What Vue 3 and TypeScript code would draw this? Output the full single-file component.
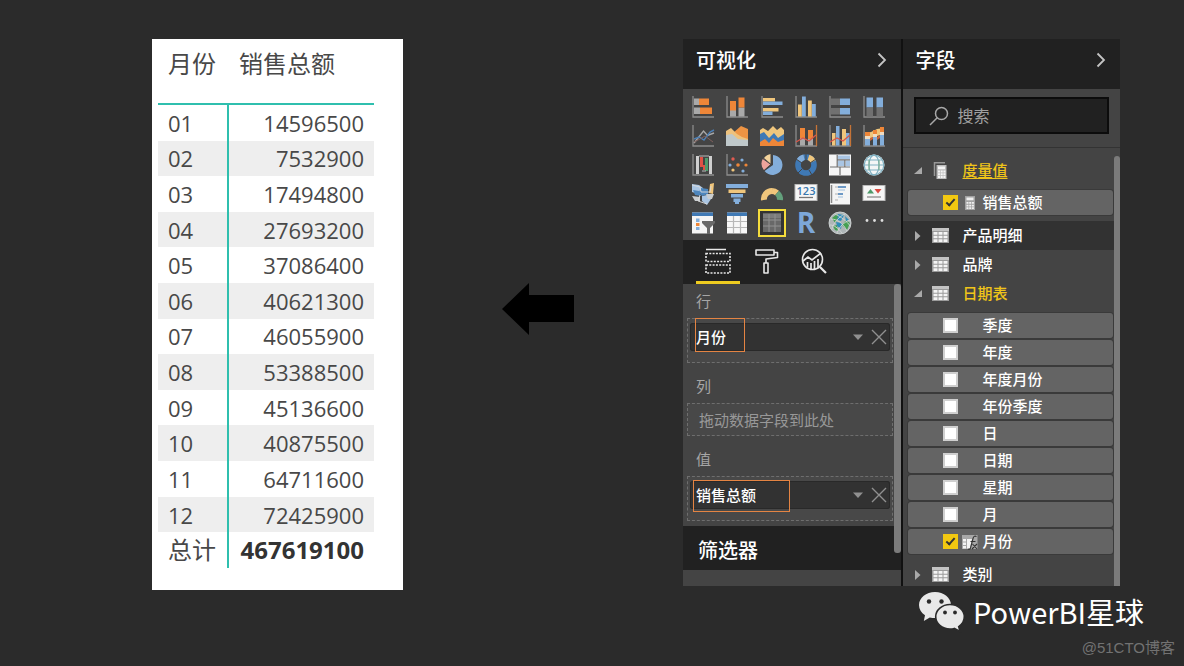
<script setup lang="ts">
import { ref } from 'vue'

interface SalesRow { month: string; total: string }
interface Visual { name: string; shape: string; active?: boolean }
interface Well { id: string; label: string; value: string }
interface Field { name: string; checked: boolean; icon?: 'calc' | 'fx' }
interface Group { name: string; icon: 'calc' | 'table'; open: boolean; used?: boolean; hover?: boolean; fields: Field[] }

const sales: SalesRow[] = [
  { month: '01', total: '14596500' },
  { month: '02', total: '7532900' },
  { month: '03', total: '17494800' },
  { month: '04', total: '27693200' },
  { month: '05', total: '37086400' },
  { month: '06', total: '40621300' },
  { month: '07', total: '46055900' },
  { month: '08', total: '53388500' },
  { month: '09', total: '45136600' },
  { month: '10', total: '40875500' },
  { month: '11', total: '64711600' },
  { month: '12', total: '72425900' },
]

const axis = '<path d="M2 1V22H23" fill="none" stroke="#8c8c8c" stroke-width="1.3"/>'
const bars = (color: string, d: string) => `<path d="${d}" fill="${color}"/>`
const O = '#ee8638'
const Y = '#f0c67c'
const B = '#83aedb'
const G = '#a9a9a9'
const D = '#707070'

const visuals: Visual[] = [
  { name: '堆积条形图', shape: axis + bars(G, 'M3 3.500h5v6.500H3zM3 12.500h6v6.500H3z') + bars(O, 'M8 3.500h10v6.500H8zM9 12.500h12v6.500H9z') },
  { name: '堆积柱形图', shape: axis + bars(G, 'M5 15h6v6.500H5zM13.500 12.500h6v9h-6z') + bars(O, 'M5 6h6v9.500H5zM13.500 2.500h6v10h-6z') },
  { name: '簇状条形图', shape: axis + bars(Y, 'M3 3h12v3.500H3zM3 13h15.500v3.500H3z') + bars(B, 'M3 6.500h19.500V10H3zM3 16.500h9.500V20H3z') },
  { name: '簇状柱形图', shape: axis + bars(Y, 'M4 9.500h3.800v12H4zM14 5.500h3.800v16H14z') + bars(B, 'M8 1.500h3.800v20H8zM18 9h3.800v12.500H18z') },
  { name: '百分比堆积条形图', shape: axis + bars(D, 'M3 3.500h9V10H3zM3 13h9v6.500H3z') + bars(B, 'M12 3.500h10V10H12zM12 13h10v6.500H12z') },
  { name: '百分比堆积柱形图', shape: axis + bars(B, 'M4.500 2.500h6.500v10H4.500zM14.500 2.500H21v10h-6.500z') + bars(D, 'M4.500 12.500h6.500v9H4.500zM14.500 12.500H21v9h-6.500z') },
  { name: '折线图', shape: axis + '<path d="M3 19 12.500 7l4 4.500L23 9" fill="none" stroke="#a8a8a8" stroke-width="1.400"/><path d="M3 15l5-2 5 3 6-8 4-2" fill="none" stroke="#4d7fb4" stroke-width="1.400"/><path d="M3 18l6-3 5-3 8 6" fill="none" stroke="#80605c" stroke-width="1"/>' },
  { name: '分区图', shape: '<path d="M1 22V8l7 1 8-7 7 3v17z" fill="#ee9444"/><path d="M1 22V7l5-3 6 6 5 3 6 2v7z" fill="#eec27d"/><path d="M1 22V11l6-1 6 5 10 1v6z" fill="#bfc8ca"/>' },
  { name: '堆积面积图', shape: '<path d="M0 22V6l3-2 5 3 5-5 4 4 4-3 3 3v16z" fill="#f0c67c"/><path d="M0 22V10l4-2 5 6 5-5 4 5 6-4v12z" fill="#3f79b5"/><path d="M0 22v-4l5-3 4 4 4-5 5 4 6-2v6z" fill="#ee8638"/>' },
  { name: '折线和堆积柱形图', shape: axis + bars(G, 'M6 14h5v7.500H6zM14 14h5v7.500h-5z') + bars(O, 'M6 4h5v10H6zM14 6h5v9h-5z') + '<path d="M22.500 1v21" stroke="#c57437" stroke-width="1.300"/><path d="M2 18l7-4 6 3 7-6" fill="none" stroke="#d9574a" stroke-width="1.300"/>' },
  { name: '折线和簇状柱形图', shape: axis + bars(Y, 'M4 9h3.500v12.500H4zM14 5h4v16.500h-4z') + bars(B, 'M8 2h3.500v19.500H8zM18 9h3.500v12.500H18z') + '<path d="M22.500 1v21" stroke="#c57437" stroke-width="1.300"/><path d="M2 18l7-4 6 3 7-6" fill="none" stroke="#d9574a" stroke-width="1.300"/>' },
  { name: '功能区图', shape: axis + bars(Y, 'M3 9l6-1 6-3 7-1v6l-7 2-6 2H3z') + bars(O, 'M3 8h5v4H3zM11 6h4v4h-4zM18 3h4v5h-4z') + bars('#f0dcc2', 'M3 12h5v3H3zM11 10h4v3h-4zM18 8h4v3h-4z') + bars('#c9653a', 'M8 14l3-1v2l-3 2zM15 13l3-2v3l-3 2z') + bars(B, 'M3 15h5v6.500H3zM11 13h4v8.500h-4zM18 11h4v10.500h-4z') },
  { name: '瀑布图', shape: axis + '<path d="M5 21V3h3v18zM18 21V3h3v18z" fill="#cfcfcf"/><path d="M9 4h3v10H9z" fill="#e05245"/><path d="M12 12h2v5h-2z" fill="#e05245"/><path d="M14 5h3v13h-3z" fill="#4d9a6a"/><path d="M8 3h10M11 18h4" stroke="#b9b9b9"/>' },
  { name: '散点图', shape: axis + '<g fill="#83aedb"><circle cx="5" cy="12" r="1.600"/><circle cx="17" cy="7" r="1.600"/><circle cx="18" cy="18" r="1.600"/></g><g fill="#ee8638"><circle cx="13" cy="12" r="1.800"/><circle cx="21" cy="12" r="1.600"/></g><circle cx="8" cy="6" r="1.700" fill="#df5b51"/><circle cx="8" cy="17" r="1.600" fill="#f0c67c"/>' },
  { name: '饼图', shape: '<path d="M13 2a10 10 0 1 1-8.500 16L13 12z" fill="#83aedb"/><path d="M11 11V1a10 10 0 0 0-7 4z" fill="#f3d39c"/><path d="M11 11 3 5.500a10 10 0 0 0 1 11.500z" fill="#eda39b"/><path d="M11 0v11.500L4 18M11 11.500 2 5" fill="none" stroke="#444" stroke-width="1"/>' },
  { name: '环形图', shape: '<circle cx="12" cy="12" r="8" fill="none" stroke="#3f79b5" stroke-width="5.600"/><path d="M14.500 4.400A8 8 0 0 1 19.200 8.500" fill="none" stroke="#f0c67c" stroke-width="5.600"/><path d="M5 8A8 8 0 0 1 10 4.200" fill="none" stroke="#83aedb" stroke-width="5.600"/><path d="M12 0v8M22 6l-6 4M2 6l6 4M4 20l4-4M18 22l-3-5" stroke="#444"/>' },
  { name: '树状图', shape: '<rect x="1" y="1.500" width="22" height="21" fill="#f5f5f5"/><path d="M10 2.500h12V6H10zM10 7.500h6V13h-6zM17.500 7.500H22V13h-4.500z" fill="#a9c5e3"/><path d="M9.200 2v12M2 14h20M9 6.800h13M16.800 7v7M12 14v8" stroke="#707070" stroke-width="1.200"/>' },
  { name: '地图', shape: '<circle cx="12" cy="12" r="10.500" fill="#f4f6f6"/><g fill="none" stroke="#7fb0c1" stroke-width="1.200"><circle cx="12" cy="12" r="9.800"/><ellipse cx="12" cy="12" rx="5" ry="9.800"/><path d="M2 12h20M4 7h16M4 17h16"/></g><path d="M7 7v10M17 7v10" stroke="#7cb08a"/>' },
  { name: '着色地图', shape: '<path d="M1 2l7 1 4 3 1 5-6 1-6-2zM11 14l5-1 4 4-4 6-5-4z" fill="#a9c5e3"/><path d="M10 6l7 1v5l-6 2-3-4zM2 8l6 1 2 5-6-1z" fill="#4d86bd"/><path d="M19 2l4-1-1 11-4-1z" fill="#f0c67c"/><path d="M15 12h8l-2 5h-4zM1 14l8 1v4H4z" fill="#c9cdd0"/><path d="M1 3l8 2 1 5 9 0 1-6M9 13l-2 6 9 3" fill="none" stroke="#dadada" stroke-width=".9"/>' },
  { name: '漏斗图', shape: bars(B, 'M1 2h22v4H1zM6 12h12v3.500H6zM8.500 16.500h7V20h-7z') + bars(Y, 'M3.500 7.500h17V11h-17z') + bars(B, 'M10 20h4v2h-4z') },
  { name: '仪表', shape: '<path d="M4 18a8 8 0 0 1 8-9" fill="none" stroke="#f0c67c" stroke-width="6"/><path d="M12 9a8 8 0 0 1 5 2" fill="none" stroke="#f0c67c" stroke-width="6"/><path d="M17 11a8 8 0 0 1 3 7" fill="none" stroke="#63a07c" stroke-width="6"/>' },
  { name: '卡片图', shape: '<rect x="1" y="2.500" width="22" height="16" fill="#f6f6f6" stroke="#bbb"/><text x="12" y="12.500" text-anchor="middle" font-family="Open Sans, sans-serif" font-size="11" font-weight="600" fill="#3978ae">123</text><path d="M5 15.500h14" stroke="#777" stroke-width="1.300"/>' },
  { name: '多行卡', shape: '<rect x="2" y="1.500" width="20" height="21" fill="#f4f4f4"/><path d="M3.500 3v18" stroke="#888" stroke-width="1.500"/><path d="M7 5h3M7 12h3M7 18h3" stroke="#b0b0b0"/><path d="M10 5h8M10 12h5" stroke="#3f79b5" stroke-width="1.700"/><path d="M10 8h7M10 15h5" stroke="#9fbfdd"/>' },
  { name: 'KPI', shape: '<rect x="1" y="3.500" width="22" height="15" fill="#f6f6f6" stroke="#bbb"/><path d="M5 11.500 8.500 7l3.500 4.500z" fill="#4d9a6a"/><path d="M12.500 7h7L16 11.500z" fill="#d94a3f"/><path d="M5 15h14" stroke="#8b8b8b" stroke-width="1.300"/>' },
  { name: '切片器', shape: '<path d="M1 1.500h21v21H1z" fill="#f5f5f5"/><path d="M1 1.500h21v3.500H1z" fill="#3f79b5"/><path d="M5 7.500h3.500V11H5zM5 16h3.500v3H5z" fill="#83aedb"/><path d="M5 12h3.500v3H5z" fill="#ee8638"/><path d="M11 10h13v2l-5 5v6h-3v-6l-5-5z" fill="#696969"/>' },
  { name: '表', shape: '<path d="M2 1.500h20v21H2z" fill="#f7f7f7"/><path d="M2 1.500h20v3.500H2z" fill="#3f79b5"/><path d="M8.500 5v17M15.500 5v17M2 10.500h20M2 16.500h20" stroke="#b8b8b8" stroke-width="1.200"/>' },
  { name: '矩阵', active: true, shape: '<path d="M3 2.500h18V21H3z" fill="#686868"/><path d="M3 2.500h18V7H3z" fill="#7c7c7c"/><path d="M9 3v18M15 3v18M3 9h18M3 15h18" stroke="#919191"/>' },
  { name: 'R 脚本视觉对象', shape: '<text x="12" y="22" text-anchor="middle" font-family="Open Sans, sans-serif" font-size="28" font-weight="700" fill="#7da7d8">R</text>' },
  { name: 'ArcGIS Maps', shape: '<circle cx="12" cy="12" r="11" fill="#aeb6b7"/><path d="M4 7l5-4 2 4-4 5zM14 14l4-5 4 3-3 7zM5 15l4-1 1 6-3-1z" fill="#45a052"/><path d="M10 3l6 1-3 6-4-1zM8 11l6 1-1 6-4-3zM17 5l4 4-3 1z" fill="#2f8cb8"/><g fill="none" stroke="#d0d5d5" stroke-width=".9"><circle cx="12" cy="12" r="11"/><path d="M3 8c6 0 12 4 16 12M7 3c6 3 12 7 15 12M2 14c4 0 8 3 12 8M17 3C10 6 5 13 4 18M22 9c-6 2-11 7-13 13"/></g>' },
  { name: '更多', shape: '<g fill="#dedede"><circle cx="5" cy="9.500" r="1.400"/><circle cx="12.500" cy="9.500" r="1.400"/><circle cx="20" cy="9.500" r="1.400"/></g>' },
]

const wells: Well[] = [
  { id: 'rows', label: '行', value: '月份' },
  { id: 'columns', label: '列', value: '' },
  { id: 'values', label: '值', value: '销售总额' },
]

const groups = ref<Group[]>([
  { name: '度量值', icon: 'calc', open: true, used: true, fields: [{ name: '销售总额', checked: true, icon: 'calc' }] },
  { name: '产品明细', icon: 'table', open: false, hover: true, fields: [] },
  { name: '品牌', icon: 'table', open: false, fields: [] },
  {
    name: '日期表', icon: 'table', open: true, used: true,
    fields: [
      { name: '季度', checked: false },
      { name: '年度', checked: false },
      { name: '年度月份', checked: false },
      { name: '年份季度', checked: false },
      { name: '日', checked: false },
      { name: '日期', checked: false },
      { name: '星期', checked: false },
      { name: '月', checked: false },
      { name: '月份', checked: true, icon: 'fx' },
    ],
  },
  { name: '类别', icon: 'table', open: false, fields: [] },
])

const search = ref('')
</script>

<template>
  <div class="slide">
    <main class="stage">
      <section class="card">
        <table class="matrix">
          <thead>
            <tr><th scope="col">月份</th><th scope="col">销售总额</th></tr>
          </thead>
          <tbody>
            <tr v-for="row in sales" :key="row.month">
              <th scope="row">{{ row.month }}</th>
              <td>{{ row.total }}</td>
            </tr>
            <tr class="total"><th scope="row">总计</th><td>467619100</td></tr>
          </tbody>
        </table>
      </section>

      <div class="arrow-cell">
        <svg class="arrow" viewBox="0 0 72 52" aria-hidden="true"><path d="M0 26 27 0V12H72V39H27V52Z" /></svg>
      </div>

      <div class="panes">
        <section class="pane">
          <header class="pane-head">
            <h2>可视化</h2>
            <button class="collapse" type="button" aria-label="折叠可视化">
              <svg viewBox="0 0 10 16"><path d="M1.500 1.500 8 8l-6.500 6.500" /></svg>
            </button>
          </header>
          <div class="gallery">
            <button
              v-for="v in visuals" :key="v.name" type="button"
              class="visual" :class="{ active: v.active }" :aria-label="v.name"
            >
              <svg viewBox="0 0 24 24" v-html="v.shape"></svg>
            </button>
          </div>
          <nav class="tabs">
            <button class="tab current" type="button" aria-label="字段">
              <svg viewBox="0 0 28 28">
                <path d="M2 2.500h20" stroke-width="1.500" />
                <path d="M2 6.500h24v8H2zM2 18h24v8H2z" stroke-dasharray="2 1.300" stroke-width="1.600" />
              </svg>
            </button>
            <button class="tab" type="button" aria-label="格式">
              <svg viewBox="0 0 28 28">
                <path d="M4 3h18v5H4zM22 5.500h3.500v5L14 12v4M12 16h4v10h-4z" stroke-linejoin="round" stroke-width="1.600" />
              </svg>
            </button>
            <button class="tab" type="button" aria-label="分析">
              <svg viewBox="0 0 28 28">
                <circle cx="12.500" cy="12.500" r="10" stroke-width="1.600" />
                <path d="M20 20l6 6" stroke-width="2.200" />
                <path d="M3 14l5-4 4 3 9-7M7.500 20v-5M11 22v-6M14.500 22v-8M18 20v-8" stroke-width="1.700" />
              </svg>
            </button>
          </nav>
          <div class="wells">
            <div v-for="w in wells" :key="w.id" class="well">
              <h3>{{ w.label }}</h3>
              <div class="drop" :class="{ empty: !w.value }">
                <div v-if="w.value" class="chip" :class="w.id">
                  <span>{{ w.value }}</span>
                  <button type="button" aria-label="菜单"><svg class="caret" viewBox="0 0 10 6"><path d="M0 .5h10L5 6z" /></svg></button>
                  <button type="button" aria-label="移除"><svg class="cross" viewBox="0 0 16 16"><path d="M1 1l14 14M15 1 1 15" /></svg></button>
                  <i class="mark"></i>
                </div>
                <template v-else>拖动数据字段到此处</template>
              </div>
            </div>
            <i class="scroll"></i>
          </div>
          <h2 class="filters">筛选器</h2>
        </section>

        <section class="pane">
          <header class="pane-head">
            <h2>字段</h2>
            <button class="collapse" type="button" aria-label="折叠字段">
              <svg viewBox="0 0 10 16"><path d="M1.500 1.500 8 8l-6.500 6.500" /></svg>
            </button>
          </header>
          <div class="search">
            <label>
              <svg viewBox="0 0 20 20"><circle cx="12.500" cy="7.500" r="6" /><path d="M8.200 11.800 1 19" /></svg>
              <input v-model="search" type="text" placeholder="搜索" aria-label="搜索" />
            </label>
          </div>
          <div class="tree">
            <template v-for="g in groups" :key="g.name">
              <button type="button" class="group" :class="{ used: g.used, hover: g.hover, measure: g.icon === 'calc' }" @click="g.open = !g.open">
                <svg class="twist" viewBox="0 0 8 10">
                  <path v-if="g.open" d="M8 1v7H0z" />
                  <path v-else d="M1 0l5.500 5L1 10z" />
                </svg>
                <svg v-if="g.icon === 'table'" class="gicon" viewBox="0 0 17 17">
                  <path d="M0 1h17v15H0z" fill="#9b9b9b" />
                  <path d="M0 1h17v3H0z" fill="#c4c4c4" />
                  <path d="M1.500 5h4v2.700h-4zM6.500 5h4v2.700h-4zM11.500 5h4v2.700h-4zM1.500 8.700h4v2.600h-4zM6.500 8.700h4v2.600h-4zM11.500 8.700h4v2.600h-4zM1.500 12.300h4V15h-4zM6.500 12.300h4V15h-4zM11.500 12.300h4V15h-4z" fill="#f4f4f4" />
                </svg>
                <svg v-else class="gicon" viewBox="0 0 17 17">
                  <path d="M2.500 14V.8H13" fill="none" stroke="#989898" stroke-width="1.500" />
                  <path d="M4.500 3h10v14h-10z" fill="#bdbdbd" />
                  <path d="M6 4.500h7v2.700H6zM6 8.500h2v2H6zM8.700 8.500h2v2h-2zM11.400 8.500h2v2h-2zM6 11.200h2v2H6zM8.700 11.200h2v2h-2zM11.400 11.200h2v2h-2zM6 14h2v2H6zM8.700 14h2v2h-2zM11.400 14h2v2h-2z" fill="#f5f5f5" />
                </svg>
                <span>{{ g.name }}</span>
              </button>
              <div v-if="g.open" class="fields">
                <label v-for="f in g.fields" :key="f.name" class="field">
                  <input v-model="f.checked" type="checkbox" />
                  <svg v-if="f.icon === 'calc'" viewBox="0 0 16 16">
                    <path d="M3 1h10v14H3z" fill="#a2a2a2" />
                    <path d="M4.500 2.500h7v2.700h-7zM4.500 7h2v1.800h-2zM7.200 7h2v1.800h-2zM9.900 7h2v1.800h-2zM4.500 9.700h2v1.800h-2zM7.200 9.700h2v1.800h-2zM9.900 9.700h2v1.800h-2zM4.500 12.300h2v1.800h-2zM7.200 12.300h2v1.800h-2zM9.900 12.300h2v1.800h-2z" fill="#f0f0f0" />
                  </svg>
                  <svg v-else-if="f.icon === 'fx'" viewBox="0 0 16 16">
                    <path d="M0 1h15.500v14H0z" fill="#a8a8a8" />
                    <path d="M1 5h3v2.500H1zM1 8.500h3V11H1zM1 12h3v2.500H1zM5 5h5l-2 9.500H5z" fill="#f4f4f4" />
                    <path d="M14.500 2.500c-2-1-3 0-3.500 2L8.500 14c-.5 1.500-1.500 1.500-2.500 1M8.500 7.500h5M10.500 10l4.500 5M15 10l-5 5" fill="none" stroke="#333" stroke-width="1.100" />
                  </svg>
                  <i v-else></i>
                  <span>{{ f.name }}</span>
                </label>
              </div>
            </template>
            <i class="scroll"></i>
          </div>
        </section>
      </div>
    </main>

    <footer class="credits">
      <div class="brand">
        <svg viewBox="0 0 46 40" aria-hidden="true">
          <path d="M16 1C7.200 1 0 6.800 0 14c0 4.200 2.300 7.800 6 10.300L4.800 30l6-3.500c1.700.4 3.400.6 5.200.6 8.800 0 16-5.900 16-13.100S24.800 1 16 1z" fill="#e9e9e9" />
          <path d="M31 13.500c-8 0-14.300 5.500-14.300 12.300S23 38 31 38c1.500 0 3-.2 4.300-.6l5.700 3-1.300-4.800c3.500-2.300 5.600-5.800 5.600-9.800 0-6.800-6.300-12.300-14.300-12.300z" fill="#e9e9e9" stroke="#2b2b2b" stroke-width="1.600" />
          <g fill="#2b2b2b"><circle cx="10" cy="10.500" r="2.200" /><circle cx="22.500" cy="10.500" r="2.200" /><circle cx="26" cy="21.500" r="1.900" /><circle cx="36" cy="21.500" r="1.900" /></g>
        </svg>
        <span>PowerBI星球</span>
      </div>
      <p>@51CTO博客</p>
    </footer>
  </div>
</template>

<style>
body {
  margin: 0;
  background: #2b2b2b;
}
</style>

<style scoped>
.slide {
  display: flex;
  flex-direction: column;
  box-sizing: border-box;
  height: 100vh;
  min-height: 640px;
  background: #2b2b2b;
  color: #fff;
  font-family: "Noto Sans CJK SC", sans-serif;
  font-size: 15px;
}
h2, h3, p { margin: 0; }
button {
  padding: 0;
  border: 0;
  background: none;
  color: inherit;
  font: inherit;
  cursor: pointer;
}
svg { display: block; flex: none; }

.stage {
  flex: 1;
  min-height: 0;
  display: grid;
  grid-template-columns: 251px 1fr 437px;
  padding: 39px 64px 0 152px;
}
.card {
  align-self: start;
  box-sizing: border-box;
  padding: 0 29px 22px 6px;
  background: #fff;
}
.matrix {
  width: 100%;
  height: 529px;
  border-spacing: 0;
  color: #484848;
  font-family: "Open Sans", "Noto Sans CJK SC", sans-serif;
  font-size: 22px;
  line-height: 28px;
}
.matrix th, .matrix td { padding: 0 10px; font-weight: 400; text-align: left; }
.matrix thead th {
  height: 48px;
  padding-bottom: 16px;
  border-bottom: 2px solid #2fbfae;
  font-family: "Noto Sans CJK SC", sans-serif;
  font-size: 24px;
}
.matrix tbody th { width: 49px; border-right: 2px solid #2fbfae; }
.matrix tbody td { text-align: right; }
.matrix tbody tr:nth-child(even) { background: #eee; }
.matrix .total th { font-size: 24px; }
.matrix .total td { font-size: 24px; font-weight: 700; color: #333; }

.arrow-cell {
  display: flex;
  justify-content: center;
  padding: 244px 10px 0 0;
}
.arrow { width: 72px; height: 52px; fill: #000; }

.panes {
  display: grid;
  grid-template-columns: 1fr 1fr;
  gap: 2px;
  min-height: 0;
  margin-bottom: 4px;
  background: #111;
}
.pane {
  display: flex;
  flex-direction: column;
  min-width: 0;
  min-height: 0;
  background: #444;
}
.pane-head {
  display: flex;
  align-items: center;
  justify-content: space-between;
  box-sizing: border-box;
  height: 50px;
  padding: 0 14px 9px 13px;
  background: #212121;
}
.pane h2 { font-size: 20px; font-weight: 500; line-height: 28px; }
.collapse svg { width: 10px; height: 16px; fill: none; stroke: #c4c4c4; stroke-width: 1.8; }

.gallery {
  display: grid;
  grid-template-columns: repeat(6, 1fr);
  grid-auto-rows: 29px;
  padding: 3px 9px 3px 3px;
}
.visual { display: flex; align-items: center; justify-content: center; }
.visual svg { width: 24px; height: 24px; overflow: visible; }
.visual.active svg { background: #333; outline: 2px solid #f4dc3c; }

.tabs {
  display: flex;
  gap: 4px;
  height: 44px;
  padding-left: 13px;
  background: #212121;
}
.tab {
  display: flex;
  align-items: center;
  justify-content: center;
  box-sizing: border-box;
  width: 44px;
  border-bottom: 3px solid transparent;
}
.tab.current { border-bottom-color: #eecb20; }
.tab svg { width: 28px; height: 28px; fill: none; stroke: #e8e8e8; }

.wells {
  position: relative;
  display: flex;
  flex-direction: column;
  gap: 14px;
  padding: 8px 8px 5px 4px;
}
.well h3 {
  margin: 0 0 8px 9px;
  color: #a6a6a6;
  font-size: 15px;
  font-weight: 400;
  line-height: 18px;
}
.drop {
  padding: 4px 2px 11px;
  border: 1px dashed #6e6e6e;
  background: #484848;
}
.drop.empty { padding: 0 11px; color: #989898; line-height: 31px; }
.chip {
  position: relative;
  display: flex;
  align-items: center;
  gap: 8px;
  height: 28px;
  padding: 0 3px 0 6px;
  border-radius: 3px;
  background: #323232;
  box-shadow: 0 0 0 1px #292929 inset;
  font-weight: 500;
}
.chip span { flex: 1; padding-bottom: 2px; }
.caret { width: 10px; height: 6px; fill: #909090; }
.cross { width: 16px; height: 16px; fill: none; stroke: #909090; stroke-width: 1.4; }
.mark {
  position: absolute;
  box-sizing: border-box;
  border: 1px solid #e48443;
}
.rows .mark { top: -5px; left: 5px; width: 50px; height: 34px; }
.values .mark { top: -1px; left: 3px; width: 97px; height: 32px; }
.scroll { position: absolute; background: #7b7b7b; }
.wells .scroll { top: 0; right: 0; bottom: -27px; width: 7px; border-radius: 3px; }
.pane .filters {
  height: 36px;
  padding: 8px 0 0 15px;
  background: #212121;
  line-height: 32px;
}

.search { padding: 8px 11px 13px; border-bottom: 1px solid #333; }
.search label {
  display: flex;
  align-items: center;
  gap: 9px;
  box-sizing: border-box;
  height: 37px;
  padding-left: 13px;
  border: 2px solid #0c0c0c;
  background: #212121;
}
.search svg { width: 20px; height: 20px; fill: none; stroke: #a8a8a8; stroke-width: 1.5; }
.search input {
  flex: 1;
  min-width: 0;
  padding: 0 0 2px;
  border: 0;
  outline: 0;
  background: none;
  color: #fff;
  font: inherit;
  font-size: 16px;
}
.search input::placeholder { color: #a0a0a0; }

.tree { position: relative; flex: 1; min-height: 0; padding-top: 8px; overflow: hidden; }
.tree .scroll { top: 8px; right: 0; bottom: 0; width: 6px; border-radius: 3px 3px 0 0; }
.group {
  display: flex;
  align-items: center;
  width: 100%;
  height: 29px;
  padding-left: 11px;
  font-weight: 500;
  text-align: left;
}
.group span { padding-bottom: 2px; }
.group.hover { background: #323232; }
.group.used { color: #f0c419; }
.measure span { text-decoration: underline; text-underline-offset: 2px; }
.twist { width: 8px; height: 10px; margin-right: 10px; fill: #a9a9a9; }
.gicon { width: 17px; height: 17px; margin-right: 14px; }
.fields {
  display: flex;
  flex-direction: column;
  gap: 2px;
  margin: 5px 7px 6px 5px;
}
.field {
  display: grid;
  grid-template-columns: 15px 16px 1fr;
  align-items: center;
  column-gap: 4px;
  height: 25px;
  padding-left: 35px;
  border-radius: 3px;
  background: #646464;
  box-shadow: 0 0 0 1px #3a3a3a;
  font-weight: 500;
}
.field svg { width: 16px; height: 16px; }
.field span { padding: 0 0 2px 1px; line-height: 23px; }
.field input {
  appearance: none;
  position: relative;
  box-sizing: border-box;
  width: 15px;
  height: 15px;
  margin: 0;
  border: 2px solid #cfcfcf;
  background: #fff;
}
.field input:checked { border-color: #f2c811; background: #f2c811; }
.field input:checked::after {
  content: "";
  position: absolute;
  top: 0;
  left: 3px;
  width: 3px;
  height: 7px;
  border: solid #333;
  border-width: 0 2px 2px 0;
  transform: rotate(42deg);
}

.credits {
  display: flex;
  flex-direction: column;
  align-items: flex-end;
  gap: 4px;
  box-sizing: border-box;
  height: 76px;
  padding-right: 9px;
}
.brand {
  display: flex;
  align-items: center;
  gap: 8px;
  height: 42px;
  padding-right: 31px;
  font-size: 29px;
  line-height: 42px;
}
.brand span { padding-bottom: 1px; }
.brand svg { width: 46px; height: 40px; overflow: visible; }
.credits p {
  color: #727272;
  font-family: "Liberation Sans", "Noto Sans CJK SC", sans-serif;
  font-size: 15px;
  line-height: 24px;
}
</style>
